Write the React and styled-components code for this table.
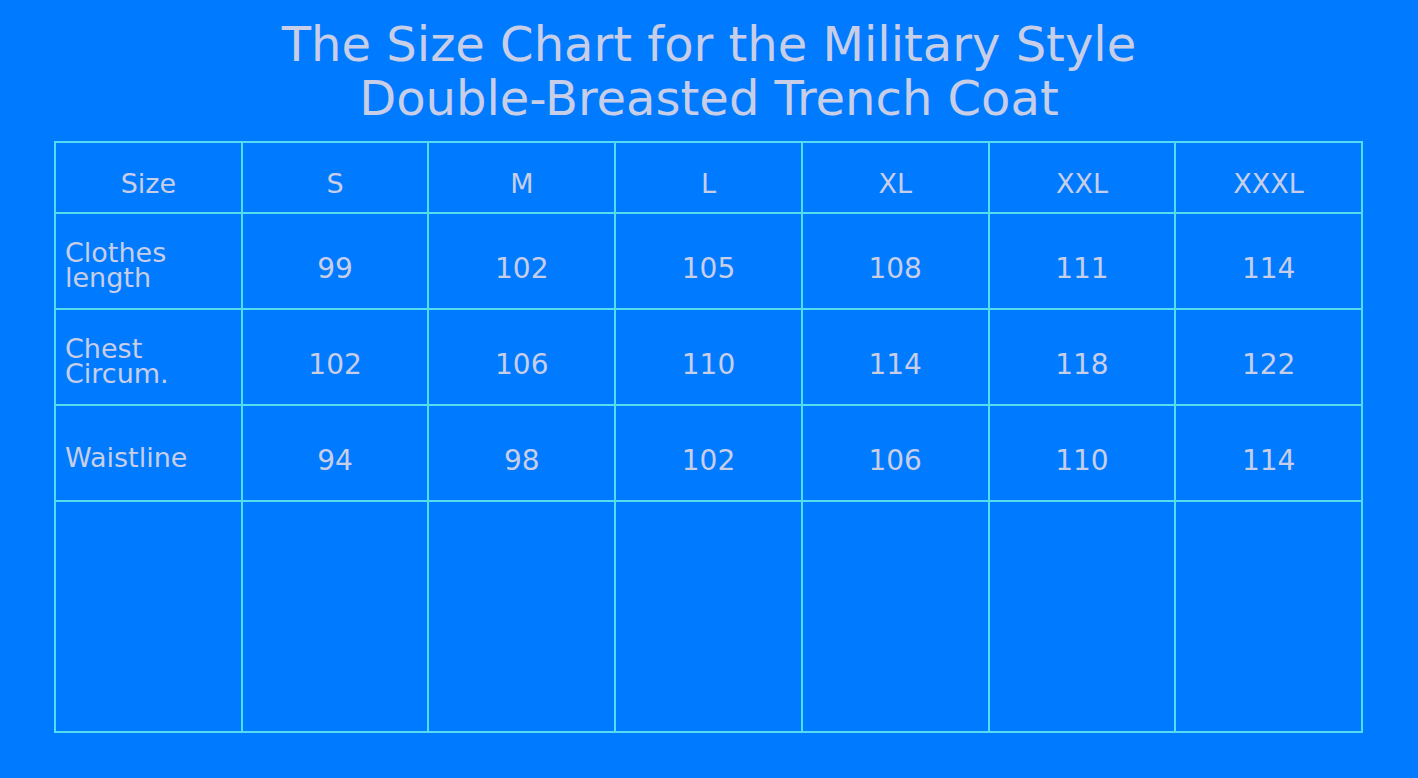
import React from "react";
import styled, { createGlobalStyle } from "styled-components";

const Global = createGlobalStyle`
  html, body {
    margin: 0;
    padding: 0;
    background: #007bff;
  }
  body {
    font-family: "DejaVu Sans", Verdana, sans-serif;
    color: #c8cee8;
  }
`;

const Page = styled.div`
  width: 1418px;
  height: 778px;
  background: #007bff;
  padding-top: 17px;
  box-sizing: border-box;
  display: flex;
  flex-direction: column;
  align-items: flex-start;
`;

const Title = styled.h1`
  align-self: stretch;
  margin: 0 0 16px 0;
  font-size: 48px;
  line-height: 54px;
  font-weight: normal;
  text-align: center;
  color: #c8cee8;
`;

const Grid = styled.div`
  margin-left: 54px;
  width: 1309px;
  box-sizing: border-box;
  display: grid;
  grid-template-columns: repeat(7, 1fr);
  grid-template-rows: 71px 96px 96px 96px 231px;
  border-left: 2px solid #56dcf0;
  border-top: 2px solid #56dcf0;
`;

const Cell = styled.div`
  box-sizing: border-box;
  border-right: 2px solid #56dcf0;
  border-bottom: 2px solid #56dcf0;
  display: flex;
  align-items: center;
  justify-content: ${(p) => (p.$label ? "flex-start" : "center")};
  padding-left: ${(p) => (p.$label ? "9px" : "0")};
  padding-top: ${(p) => (p.$head ? "12px" : p.$label ? "8px" : "14px")};
  font-size: ${(p) => (p.$label || p.$head ? "27px" : "28px")};
  line-height: ${(p) => (p.$label ? "25px" : "normal")};
  color: #c8cee8;
  white-space: pre-line;
`;

const head = ["Size", "S", "M", "L", "XL", "XXL", "XXXL"];
const rows = [
  ["Clothes\nlength", "99", "102", "105", "108", "111", "114"],
  ["Chest\nCircum.", "102", "106", "110", "114", "118", "122"],
  ["Waistline", "94", "98", "102", "106", "110", "114"],
];

export default function App() {
  return (
    <>
      <Global />
      <Page>
        <Title>
          The Size Chart for the Military Style
          <br />
          Double-Breasted Trench Coat
        </Title>
        <Grid>
          {head.map((h, i) => (
            <Cell key={"h" + i} $head>
              {h}
            </Cell>
          ))}
          {rows.map((r, ri) =>
            r.map((c, ci) => (
              <Cell key={ri + "-" + ci} $label={ci === 0}>
                {c}
              </Cell>
            ))
          )}
          {head.map((_, i) => (
            <Cell key={"e" + i} />
          ))}
        </Grid>
      </Page>
    </>
  );
}
